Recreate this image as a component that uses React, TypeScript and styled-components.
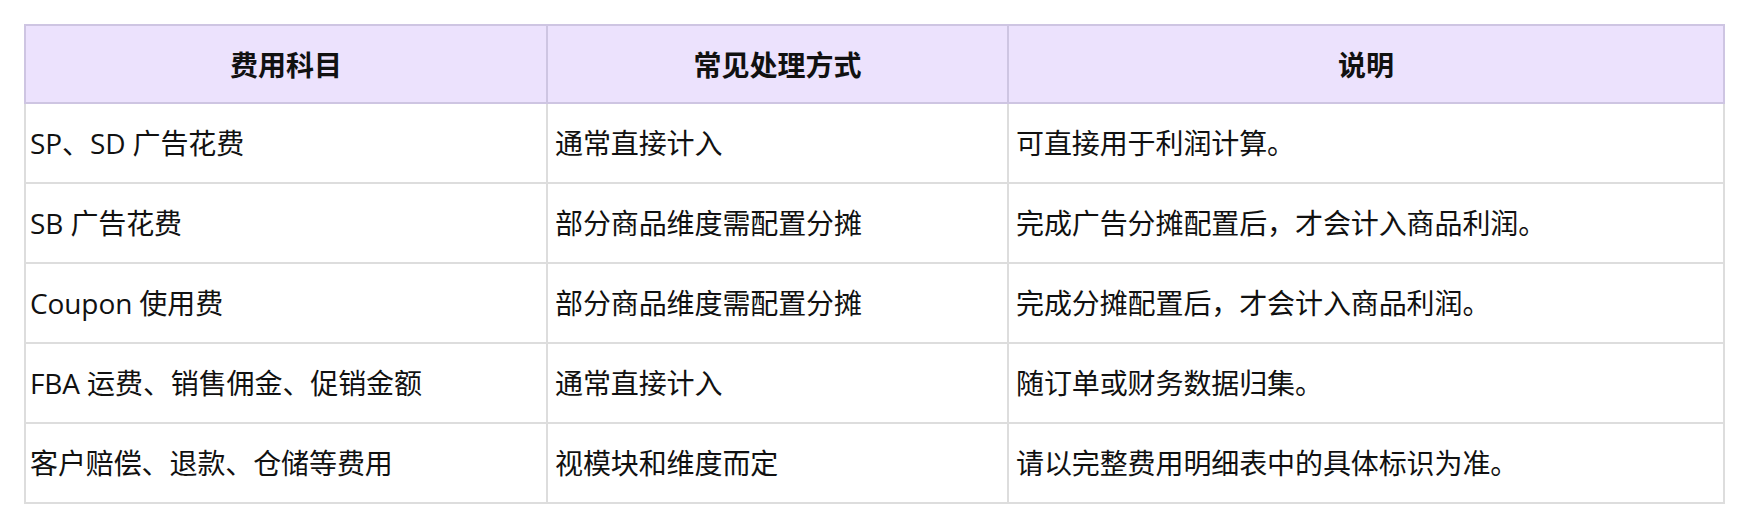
import styled, { createGlobalStyle } from 'styled-components'

const GlobalStyle = createGlobalStyle`
  html, body {
    margin: 0;
    padding: 0;
    background: #ffffff;
  }
  body {
    font-family: "Open Sans", "Noto Sans CJK SC", sans-serif;
    color: #111111;
  }
`

const Page = styled.div`
  padding: 24px 25px 24px 24px;
`

const Table = styled.table`
  width: 100%;
  border-collapse: collapse;
  table-layout: fixed;
  font-size: 28px;
`

const HeadCell = styled.th`
  height: 76px;
  padding: 0 10px;
  background: #ece2fd;
  border: 2px solid #cec5e2;
  font-weight: 700;
  text-align: center;
  vertical-align: middle;
  font-family: "Noto Sans CJK SC", sans-serif;
  color: #111111;
`

const Cell = styled.td`
  height: 78px;
  padding: 0 8px 0 7px;
  border: 2px solid #dddddd;
  vertical-align: middle;
  line-height: 1.3;
  color: #111111;
  white-space: nowrap;
  letter-spacing: -0.1px;

  &:first-child {
    padding-left: 4px;
  }
`

const rows = [
  ['SP、SD 广告花费', '通常直接计入', '可直接用于利润计算。'],
  ['SB 广告花费', '部分商品维度需配置分摊', '完成广告分摊配置后，才会计入商品利润。'],
  ['Coupon 使用费', '部分商品维度需配置分摊', '完成分摊配置后，才会计入商品利润。'],
  ['FBA 运费、销售佣金、促销金额', '通常直接计入', '随订单或财务数据归集。'],
  ['客户赔偿、退款、仓储等费用', '视模块和维度而定', '请以完整费用明细表中的具体标识为准。'],
]

export default function App() {
  return (
    <>
      <GlobalStyle />
      <Page>
        <Table>
          <colgroup>
            <col style={{ width: 522 }} />
            <col style={{ width: 461 }} />
            <col />
          </colgroup>
          <thead>
            <tr>
              <HeadCell>费用科目</HeadCell>
              <HeadCell>常见处理方式</HeadCell>
              <HeadCell>说明</HeadCell>
            </tr>
          </thead>
          <tbody>
            {rows.map((r) => (
              <tr key={r[0]}>
                {r.map((c, i) => (
                  <Cell key={i}>{c}</Cell>
                ))}
              </tr>
            ))}
          </tbody>
        </Table>
      </Page>
    </>
  )
}
